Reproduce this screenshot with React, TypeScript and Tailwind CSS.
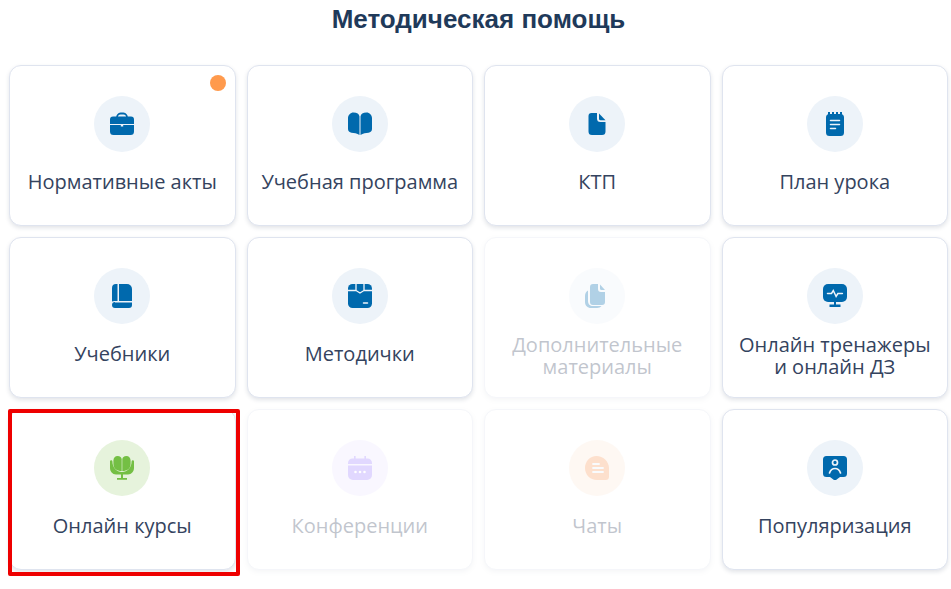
import type { ReactNode } from "react"

// Icons: drawn on a 24x24 box, the cut lines are pale strokes
const cut = { stroke: "#eef4fa", strokeWidth: 1.2, fill: "none", strokeLinecap: "round" as const }

const Briefcase = (
  <>
    <path d="M7 6V5.500C7 3.500 8.500 1.500 10.500 1.500h3C15.500 1.500 17 3.500 17 5.500V6" fill="none" stroke="currentColor" strokeWidth="1.800" />
    <path d="M3 4.500h18a3 3 0 0 1 3 3V12H0V7.500a3 3 0 0 1 3-3z" />
    <path d="M0 13h10.800v1.500h2.400V13H24v6.500a3.500 3.500 0 0 1-3.500 3.500h-17A3.500 3.500 0 0 1 0 19.500z" />
  </>
)
const OpenBook = (
  <>
    <path d="M5.500 0.500c3.500 0 5.700 1.500 6 4V23C9 21.500 6 21 3.500 20.800 1.500 20.500 0 19 0 17V6c0-3 2.500-5.500 5.500-5.500z" />
    <path d="M18.500 0.500c-3.500 0-5.700 1.500-6 4V23c2.500-1.500 5.500-2 8-2.200 2-.3 3.500-1.800 3.500-3.800V6c0-3-2.500-5.500-5.500-5.500z" />
  </>
)
const FileDoc = (
  <>
    <path d="M6.500 1h5.500v5.500a3.500 3.500 0 0 0 3.500 3.500h5V19.500a3.500 3.500 0 0 1-3.500 3.500H7a3.500 3.500 0 0 1-3.500-3.500V4a3 3 0 0 1 3-3z" />
    <path d="M14 1.500l6.500 6.700h-5A1.500 1.500 0 0 1 14 6.700z" />
  </>
)
const Notepad = (
  <>
    <path d="M5 0h2v3H5zM9 0h2v3H9zM13 0h2v3h-2zM17 0h2v3h-2z" />
    <path d="M6.500 2h11A3.500 3.500 0 0 1 21 5.500v15a3.500 3.500 0 0 1-3.500 3.500h-11A3.500 3.500 0 0 1 3 20.500v-15A3.500 3.500 0 0 1 6.500 2z" />
    <path d="M7.500 8.500h9M7.500 12.500h9M7.500 16.500h5" {...cut} strokeWidth="1.500" />
  </>
)
const BookClosed = (
  <>
    <path d="M2 4a4 4 0 0 1 4-4h1.500v17H4.500C3.500 17 2.700 17.200 2 17.600z" />
    <path d="M9 0h8a5 5 0 0 1 5 5v12H9z" />
    <path d="M5 18.500h17V21a3 3 0 0 1-3 3H5a3 3 0 0 1 0-6z" />
  </>
)
const PackageBox = (
  <>
    <rect x="0" y="0" width="24" height="24" rx="4.500" />
    <path d="M0 6.500h8V0M8 6.500l4 2.500 4-2.500V0M16 6.500h8" {...cut} strokeLinecap="butt" strokeWidth="1.300" />
    <path d="M15.500 19h4" {...cut} strokeWidth="1.500" />
  </>
)
const CopyFiles = (
  <>
    <path d="M3 6.500C1 7.500 0 9.500 0 12v6c0 3.500 2.500 6 6 6h6c2 0 3.500-.8 4.500-2H8c-3 0-5-2-5-5z" />
    <path d="M8 0h5v5a3 3 0 0 0 3 3h4v10a3 3 0 0 1-3 3H8a3 3 0 0 1-3-3V3a3 3 0 0 1 3-3z" />
    <path d="M15 .5L20 6h-3.500A1.500 1.500 0 0 1 15 4.500z" />
  </>
)
const Monitor = (
  <>
    <rect x="0" y="0" width="24" height="18" rx="5" />
    <path d="M11 17h2v3.500h-2zM6.500 20.500h11V23h-11z" />
    <path d="M4.500 9.500h4l1.800-3 2.800 6 1.800-3h4.500" {...cut} strokeWidth="1.500" />
  </>
)
const Mic = (
  <>
    <path d="M3.400 4.500c0-2.500 1.800-4.500 4.200-4.500s4.100 1.500 4.100 3.500V15C6.500 15 3.400 12.500 3.400 8z" />
    <path d="M20.600 4.500c0-2.500-1.800-4.500-4.200-4.500s-4.100 1.500-4.100 3.500V15c5.200 0 8.300-2.500 8.300-7z" />
    <path d="M0 5.500a1.200 1.200 0 0 1 2.400-.2C2.500 12 6.500 16 12 16s9.500-4 9.600-10.700a1.200 1.200 0 0 1 2.400.2V12c0 3.500-2.500 6.500-6 6.500H6c-3.500 0-6-3-6-6.500z" />
    <path d="M11 18h2v4h-2zM7 22h10v1.800H7z" />
  </>
)
const Calendar = (
  <>
    <path d="M6 0h1.600v2.500h8.800V0H18v2.500h1.500A4.500 4.500 0 0 1 24 7v1H0V7a4.500 4.500 0 0 1 4.500-4.500H6z" />
    <path d="M0 9.500h24V19a5 5 0 0 1-5 5H5a5 5 0 0 1-5-5z" />
    <circle cx="7.500" cy="16" r="1.300" fill="#fff" />
    <circle cx="12" cy="16" r="1.300" fill="#fff" />
    <circle cx="16.500" cy="16" r="1.300" fill="#fff" />
  </>
)
const Chat = (
  <>
    <path d="M11.500 0C18 0 24 5.500 24 12v8.500a3.500 3.500 0 0 1-3.500 3.500H12C5 24 0 18.500 0 12S5 0 11.500 0z" />
    <path d="M8 8h6M8 12h10M8 16h10" {...cut} strokeWidth="1.800" />
  </>
)
const Profile = (
  <>
    <path d="M3.500 0h17A3.500 3.500 0 0 1 24 3.500v14a3.500 3.500 0 0 1-3.500 3.500H17l-4 3a1.600 1.600 0 0 1-2 0l-4-3H3.500A3.500 3.500 0 0 1 0 17.500v-14A3.500 3.500 0 0 1 3.500 0z" />
    <circle cx="12" cy="6.500" r="2.500" {...cut} strokeWidth="1.700" />
    <path d="M6.500 17c1-3 3-4.500 5.500-4.500s4.500 1.500 5.500 4.500" {...cut} strokeWidth="1.700" />
  </>
)

type Item = {
  label: ReactNode
  icon: ReactNode
  tone: string
  off?: boolean
  dot?: boolean
  marked?: boolean
}

const blue = "bg-[#edf3f9] text-[#0069ad]"

const items: Item[] = [
  { label: "Нормативные акты", icon: Briefcase, tone: blue, dot: true },
  { label: "Учебная программа", icon: OpenBook, tone: blue },
  { label: "КТП", icon: FileDoc, tone: blue },
  { label: "План урока", icon: Notepad, tone: blue },
  { label: "Учебники", icon: BookClosed, tone: blue },
  { label: "Методички", icon: PackageBox, tone: blue },
  { label: <span className="block pt-[4px]">Дополнительные<br />материалы</span>, icon: CopyFiles, tone: blue, off: true },
  { label: <span className="block pt-[4px]">Онлайн тренажеры<br />и онлайн ДЗ</span>, icon: Monitor, tone: blue },
  { label: "Онлайн курсы", icon: Mic, tone: "bg-[#e6f3dc] text-[#74bf44]", marked: true },
  { label: "Конференции", icon: Calendar, tone: "bg-[#ece6ff] text-[#9d80ff]", off: true },
  { label: "Чаты", icon: Chat, tone: "bg-[#fde9d9] text-[#fb9a5c]", off: true },
  { label: "Популяризация", icon: Profile, tone: blue },
]

function Card({ item }: { item: Item }) {
  return (
    <div className="relative h-[161px]">
      <div
        className={
          "flex h-full flex-col items-center rounded-[12px] border border-[#dfe4ef] bg-white pt-[30px] shadow-[0_2px_4px_rgba(52,67,94,0.14)] " +
          (item.off ? "opacity-30" : "")
        }
      >
        <div className={"flex h-14 w-14 items-center justify-center rounded-full " + item.tone}>
          <svg width="24" height="24" viewBox="0 0 24 24" fill="currentColor">
            {item.icon}
          </svg>
        </div>
        <div className="mt-[8px] flex h-[44px] items-center text-center text-[20px] leading-[22px] text-[#34435e]">
          <span>{item.label}</span>
        </div>
      </div>
      {item.dot && <div className="absolute right-[10px] top-[10px] h-4 w-4 rounded-full bg-[#ff9a4d]" />}
      {item.marked && (
        <div className="absolute -left-[1px] -right-[4px] -bottom-[6px] top-0 rounded-[2px] border-4 border-[#ee0000]" />
      )}
    </div>
  )
}

export default function App() {
  return (
    <div className="h-[589px] w-[951px] overflow-hidden bg-white font-['Open_Sans',sans-serif]">
      <h1 className="pl-[6px] pt-[4px] text-center font-['Liberation_Sans',sans-serif] text-[26px] leading-[30px] font-bold text-[#1f3a5a]">
        Методическая помощь
      </h1>
      <div className="mt-[31px] grid grid-cols-4 gap-[11px] pl-[9px] pr-[3px]">
        {items.map((item, i) => (
          <Card key={i} item={item} />
        ))}
      </div>
    </div>
  )
}
